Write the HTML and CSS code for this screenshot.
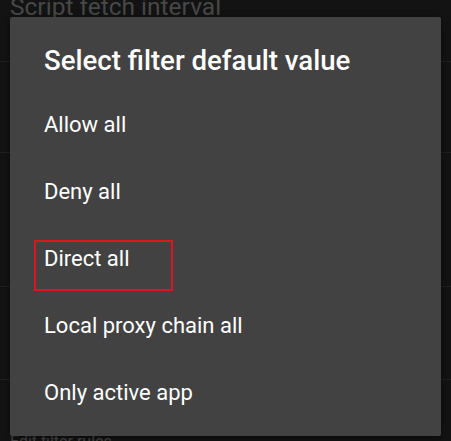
FILE: index.html
```html
<!DOCTYPE html>
<html>
<head lang="en">
    <meta charset="UTF-8">
    <title>Select filter default value</title>
    <link rel="stylesheet" href="styles.css">
</head>
<body>
<div class="screen">
    <!--背后的设置列表-->
    <div class="settings">
        <div class="pref first"><span class="pref-title">Script fetch interval</span></div>
        <div class="pref p2"></div>
        <div class="pref p3"></div>
        <div class="pref p4"></div>
        <div class="pref last"><span class="pref-small">Edit filter rules</span></div>
    </div>
    <!--对话框-->
    <div class="dialog">
        <h2 class="dialog-title">Select filter default value</h2>
        <ul class="options">
            <li><span>Allow all</span></li>
            <li><span>Deny all</span></li>
            <li><span class="marked">Direct all</span></li>
            <li><span>Local proxy chain all</span></li>
            <li><span>Only active app</span></li>
        </ul>
    </div>
</div>
</body>
</html>
```
FILE: styles.css
```css
* {
    margin: 0;
    padding: 0;
    box-sizing: border-box;
}

ul {
    list-style: none;
}

body {
    background-color: #131313;
    font-family: Roboto, "Liberation Sans", sans-serif;
    overflow: hidden;
}

.screen {
    position: relative;
    width: 451px;
    height: 441px;
    overflow: hidden;
}

.settings {
    display: flex;
    flex-direction: column;
}

.pref {
    border-bottom: 1px solid #202020;
}

.pref.first {
    height: 62px;
}

.pref-title {
    display: block;
    margin-top: -5px;
    padding-left: 10px;
    font-size: 24.5px;
    line-height: 24px;
    color: #484848;
}

.pref.p2 {
    height: 91px;
}

.pref.p3 {
    height: 134px;
}

.pref.p4 {
    height: 93px;
}

.pref.last {
    border-bottom: none;
    padding-top: 52px;
}

.pref-small {
    display: block;
    padding-left: 10px;
    font-size: 16px;
    line-height: 20px;
    color: #484848;
}

.dialog {
    position: absolute;
    left: 10px;
    top: 17px;
    width: 431px;
    height: 419px;
    background-color: #424242;
    border-radius: 2px;
    box-shadow: 0 2px 8px rgba(0, 0, 0, 0.5);
}

.dialog-title {
    padding: 28px 0 0 34px;
    height: 74px;
    font-size: 27.6px;
    font-weight: 500;
    line-height: 32px;
    color: #fff;
}

.options li {
    height: 67px;
    display: flex;
    align-items: center;
    padding-left: 34px;
    font-size: 22px;
    line-height: 26px;
    color: #fff;
}

.marked {
    display: block;
    width: 139px;
    height: 51px;
    margin: 13px 0 0 -10px;
    padding: 4px 0 0 8px;
    border: 2px solid #e0141e;
}
```
